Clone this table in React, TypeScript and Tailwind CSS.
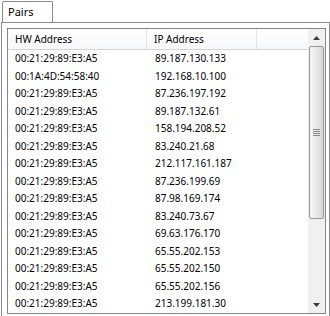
const rows = [
  ["00:21:29:89:E3:A5", "89.187.130.133"],
  ["00:1A:4D:54:58:40", "192.168.10.100"],
  ["00:21:29:89:E3:A5", "87.236.197.192"],
  ["00:21:29:89:E3:A5", "89.187.132.61"],
  ["00:21:29:89:E3:A5", "158.194.208.52"],
  ["00:21:29:89:E3:A5", "83.240.21.68"],
  ["00:21:29:89:E3:A5", "212.117.161.187"],
  ["00:21:29:89:E3:A5", "87.236.199.69"],
  ["00:21:29:89:E3:A5", "87.98.169.174"],
  ["00:21:29:89:E3:A5", "83.240.73.67"],
  ["00:21:29:89:E3:A5", "69.63.176.170"],
  ["00:21:29:89:E3:A5", "65.55.202.153"],
  ["00:21:29:89:E3:A5", "65.55.202.150"],
  ["00:21:29:89:E3:A5", "65.55.202.156"],
  ["00:21:29:89:E3:A5", "213.199.181.30"],
];

function Arrow({ down = false }: { down?: boolean }) {
  return (
    <svg width="7" height="4" viewBox="0 0 7 4" className={down ? "rotate-180" : ""}>
      <path d="M3.5 0 L7 4 L0 4 Z" fill="#3b3b3b" />
    </svg>
  );
}

function ScrollBar() {
  return (
    <div className="flex h-full w-[17px] flex-col bg-[#f0f0f0]">
      <div className="flex h-[17px] items-center justify-center">
        <Arrow />
      </div>
      <div className="mx-px flex h-[173px] items-center justify-center rounded-[2px] border border-[#979797] bg-gradient-to-r from-[#f6f6f6] via-[#e8e8e8] to-[#d6d6d6]">
        <div className="flex w-[7px] flex-col gap-px">
          <div className="h-px bg-[#8a8a8a]" />
          <div className="h-px bg-[#8a8a8a]" />
          <div className="h-px bg-[#8a8a8a]" />
          <div className="h-px bg-[#8a8a8a]" />
        </div>
      </div>
      <div className="flex-1" />
      <div className="flex h-[17px] items-center justify-center">
        <Arrow down />
      </div>
    </div>
  );
}

export default function App() {
  return (
    <div className="h-[316px] w-[330px] bg-white pt-px text-[10px] text-black [font-family:'Noto_Sans',sans-serif]">
      {/* Tab */}
      <div className="relative z-10 ml-[2px] flex h-[21px] w-[51px] items-center rounded-t-[2px] border border-b-0 border-[#898c95] bg-white pl-[5px] text-[11px]">
        Pairs
      </div>

      {/* Tab body */}
      <div className="ml-px flex h-[295px] w-[329px] flex-col border border-[#898c95] bg-white pb-[2px] pl-[5px] pr-[3px] pt-[5px]">
        <div className="flex flex-1 overflow-hidden border border-[#828790]">
          <div className="flex flex-1 flex-col overflow-hidden">
            <div className="flex h-[21px] shrink-0 items-center border-b border-[#d5d5d5] bg-gradient-to-b from-white to-[#f7f8f9]">
              <div className="flex h-full w-[139px] items-center border-r border-[#e3e4e6] pl-[7px]">HW Address</div>
              <div className="flex h-full w-[110px] items-center border-r border-[#e3e4e6] pl-[7px]">IP Address</div>
              <div className="flex-1" />
            </div>
            {rows.map(([hw, ip], i) => (
              <div key={i} className="flex h-[17.5px] shrink-0 items-center">
                <div className="w-[140px] pl-[7px]">{hw}</div>
                <div className="pl-[7px]">{ip}</div>
              </div>
            ))}
          </div>
          <ScrollBar />
        </div>
      </div>
    </div>
  );
}
